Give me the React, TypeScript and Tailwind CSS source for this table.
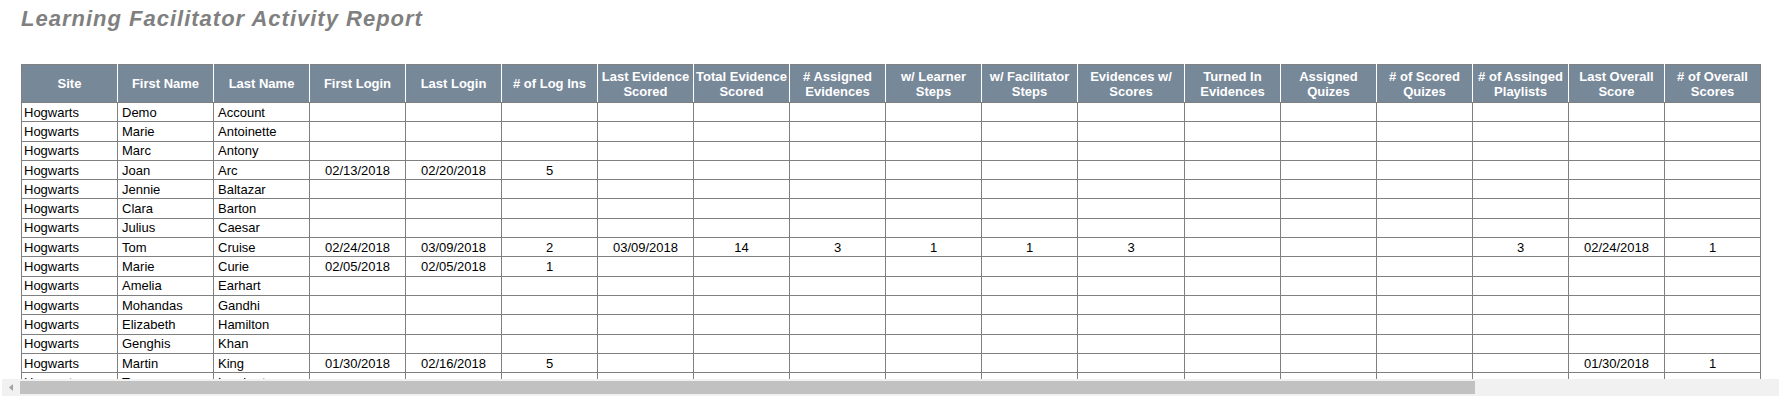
const headers = [
  'Site',
  'First Name',
  'Last Name',
  'First Login',
  'Last Login',
  '# of Log Ins',
  'Last Evidence Scored',
  'Total Evidence Scored',
  '# Assigned Evidences',
  'w/ Learner Steps',
  'w/ Facilitator Steps',
  'Evidences w/ Scores',
  'Turned In Evidences',
  'Assigned Quizes',
  '# of Scored Quizes',
  '# of Assinged Playlists',
  'Last Overall Score',
  '# of Overall Scores',
];

// only the filled columns are listed, the rest stay blank
type Row = { first: string; last: string; vals?: Record<number, string> };

const rows: Row[] = [
  { first: 'Demo', last: 'Account' },
  { first: 'Marie', last: 'Antoinette' },
  { first: 'Marc', last: 'Antony' },
  { first: 'Joan', last: 'Arc', vals: { 3: '02/13/2018', 4: '02/20/2018', 5: '5' } },
  { first: 'Jennie', last: 'Baltazar' },
  { first: 'Clara', last: 'Barton' },
  { first: 'Julius', last: 'Caesar' },
  {
    first: 'Tom',
    last: 'Cruise',
    vals: {
      3: '02/24/2018',
      4: '03/09/2018',
      5: '2',
      6: '03/09/2018',
      7: '14',
      8: '3',
      9: '1',
      10: '1',
      11: '3',
      15: '3',
      16: '02/24/2018',
      17: '1',
    },
  },
  { first: 'Marie', last: 'Curie', vals: { 3: '02/05/2018', 4: '02/05/2018', 5: '1' } },
  { first: 'Amelia', last: 'Earhart' },
  { first: 'Mohandas', last: 'Gandhi' },
  { first: 'Elizabeth', last: 'Hamilton' },
  { first: 'Genghis', last: 'Khan' },
  {
    first: 'Martin',
    last: 'King',
    vals: { 3: '01/30/2018', 4: '02/16/2018', 5: '5', 16: '01/30/2018', 17: '1' },
  },
  { first: 'Tupac', last: 'Lambert' },
  { first: 'Abraham', last: 'Lincoln' },
];

export default function App() {
  return (
    <div className="w-[1779px] h-[412px] overflow-hidden bg-white font-['Liberation_Sans',Arial,sans-serif] text-black">
      <h1 className="pl-[21px] pt-[8px] text-[22px] leading-[22px] font-bold italic tracking-[1px] text-[#808080]">
        Learning Facilitator Activity Report
      </h1>

      <div className="mt-[34px]">
        {/* table area, clipped above the horizontal scrollbar */}
        <div className="h-[315px] overflow-hidden pl-[21px]">
          <table className="table-fixed border-collapse w-[1739px] text-[13px] leading-[15px]">
            <colgroup>
              {headers.map((h, i) => (
                <col key={h} className={i === 11 ? 'w-[107px]' : 'w-[96px]'} />
              ))}
            </colgroup>
            <thead>
              <tr className="h-[38px] bg-[#778899]">
                {headers.map((h, i) => (
                  <th
                    key={h}
                    className={`px-px font-bold text-white text-center align-middle border-y border-y-[#808080] border-x ${
                      i === 0 ? 'border-l-[#808080]' : 'border-l-white'
                    } ${i === headers.length - 1 ? 'border-r-[#808080]' : 'border-r-white'}`}
                  >
                    {h}
                  </th>
                ))}
              </tr>
            </thead>
            <tbody>
              {rows.map((r, ri) => (
                <tr key={ri} className="h-[19.3px]">
                  <td className="border border-[#808080] pl-[2px] py-0 whitespace-nowrap">Hogwarts</td>
                  <td className="border border-[#808080] pl-[4px] py-0 whitespace-nowrap">{r.first}</td>
                  <td className="border border-[#808080] pl-[4px] py-0 whitespace-nowrap">{r.last}</td>
                  {headers.slice(3).map((h, ci) => (
                    <td key={h} className="border border-[#808080] text-center py-0 whitespace-nowrap">
                      {r.vals?.[ci + 3] ?? ''}
                    </td>
                  ))}
                </tr>
              ))}
            </tbody>
          </table>
        </div>

        {/* horizontal scrollbar */}
        <div className="ml-[2px] h-[17px] bg-[#f1f1f1] flex items-center">
          <div className="w-[18px] h-full flex items-center justify-center">
            <svg width="4" height="7" viewBox="0 0 4 7">
              <path d="M4 0 L0 3.5 L4 7 Z" fill="#a3a3a3" />
            </svg>
          </div>
          <div className="w-[1455px] h-[13px] bg-[#c1c1c1]" />
        </div>
      </div>
    </div>
  );
}
